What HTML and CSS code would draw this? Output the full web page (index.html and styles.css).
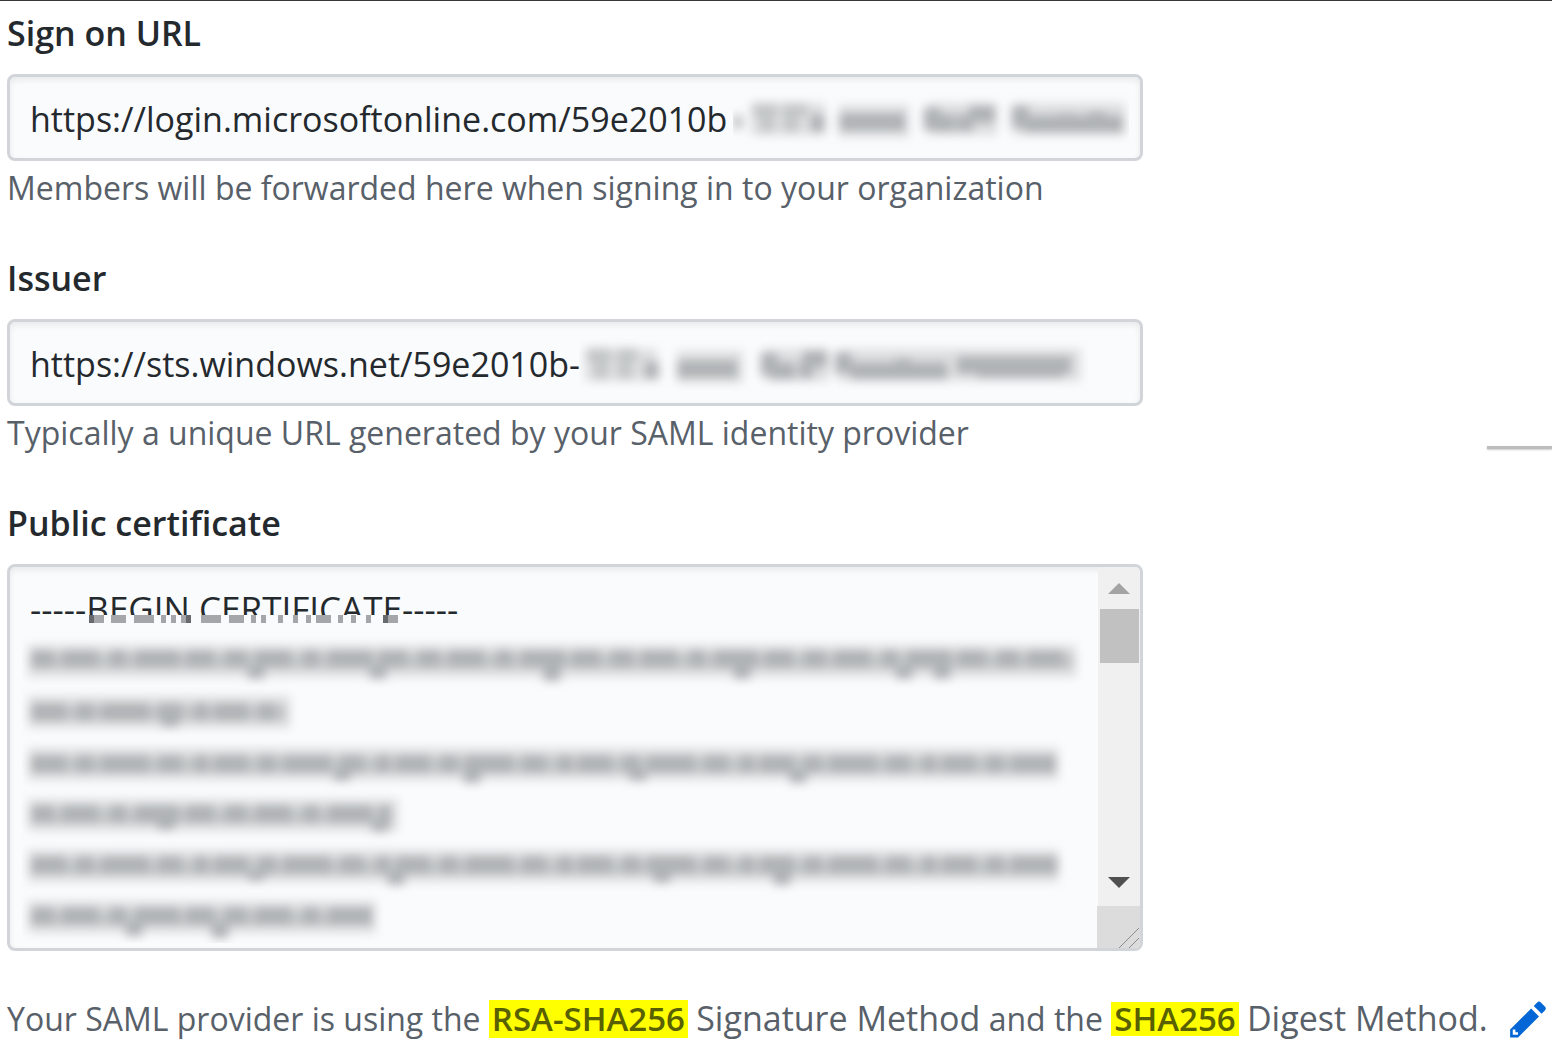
FILE: index.html
```html
<!DOCTYPE html>
<html lang="en">
<head>
<meta charset="utf-8">
<meta name="viewport" content="width=device-width, initial-scale=1">
<title>SAML single sign-on settings</title>
<link rel="stylesheet" href="styles.css">
</head>
<body>
<main class="page">
  <form class="settings">
    <div class="group">
      <label class="label" for="sso-url">Sign on URL</label>
      <div class="control">
        <input class="input" id="sso-url" type="text" value="https://login.microsoftonline.com/59e2010b">
        <svg class="redaction redaction-url" viewBox="0 0 396 54" width="396" height="54" aria-hidden="true">
          <g class="smear">
            <path class="wash" d="M18 27h74M106 29h70M194 27h70M280 27h112"/>
            <path class="ink light" d="M0 30h10M20 18h24M50 18h24M34 22v18M58 22v18"/>
            <path class="ink" d="M78 31h14M106 30h66M199 16v22M202 31h20M224 31h16M236 22h26M287 14v22M292 32h98M334 22v12M364 20v12"/>
          </g>
        </svg>
      </div>
      <p class="hint">Members will be forwarded here when signing in to your organization</p>
    </div>

    <div class="group">
      <label class="label" for="issuer">Issuer</label>
      <div class="control">
        <input class="input" id="issuer" type="text" value="https://sts.windows.net/59e2010b-">
        <svg class="redaction redaction-issuer" viewBox="0 0 510 54" width="510" height="54" aria-hidden="true">
          <g class="smear">
            <path class="wash" d="M6 28h72M98 30h66M184 28h66M258 28h244"/>
            <path class="ink light" d="M8 18h24M38 18h20M22 22v20M46 22v20"/>
            <path class="ink" d="M66 33h14M98 32h60M190 16v22M192 34h24M220 33h14M224 22h24M264 16v20M272 34h96M324 22v12M378 28h114M398 32h86"/>
          </g>
        </svg>
      </div>
      <p class="hint">Typically a unique URL generated by your SAML identity provider</p>
      <span class="rule"></span>
    </div>

    <div class="group">
      <label class="label" for="certificate">Public certificate</label>
      <div class="control certificate">
        <textarea class="textarea" id="certificate" spellcheck="false">-----BEGIN CERTIFICATE-----</textarea>
        <svg class="mosaic" viewBox="0 0 316 8" width="316" height="8" aria-hidden="true">
          <path class="cover" d="M0 4h316"/>
          <path class="tiles" d="M3 4h15M25 4h15M48 4h20M75 4h5M85 4h5M95 4h10M115 4h20M143 4h15M165 4h5M175 4h5M192 4h5M207 4h5M220 4h5M230 4h15M252 4h5M265 4h5M280 4h5M297 4h15"/>
          <path class="tiles dark" d="M3 4h5M100 4h5M297 4h5"/>
        </svg>
        <svg class="redaction redaction-cert" viewBox="0 0 1064 310" width="1064" height="310" aria-hidden="true">
          <g class="smear">
            <path class="wash" d="M6 28h1048M6 79h262M6 131h1030M6 182h370M6 233h1030M6 284h348"/>
            <path class="ink light" d="M8 28h1044M8 80h256M8 132h1026M8 183h362M8 234h1028M8 285h342"/>
            <path class="ink pattern-a" d="M10 26h1042M10 181h358M10 283h340"/>
            <path class="ink pattern-b" d="M10 79h252M10 131h1024M10 232h1026"/>
            <path class="ink" d="M234 34v12M356 34v12M530 34v14M720 34v12M882 34v12M920 34v12M148 86v8M320 138v10M450 138v12M616 138v10M776 138v12M144 189v8M358 189v10M234 240v8M374 240v12M640 240v10M760 240v12M112 291v12M198 291v14"/>
          </g>
        </svg>
        <div class="scrollbar" aria-hidden="true">
          <svg class="arrow arrow-up" viewBox="0 0 22 11" width="22" height="11"><path d="M0 11L11 0l11 11z"/></svg>
          <div class="track"><div class="thumb"></div></div>
          <svg class="arrow arrow-down" viewBox="0 0 22 11" width="22" height="11"><path d="M0 0h22L11 11z"/></svg>
          <svg class="grip" viewBox="0 0 44 42" width="44" height="42"><path d="M22 42l20-20M32 42l10-10"/></svg>
        </div>
      </div>
    </div>

    <div class="summary">
      <p class="methods">Your SAML provider is using the <mark class="mark mark-tall">RSA-SHA256</mark> <span class="method">Signature Method</span> and the <mark class="mark">SHA256</mark> <span class="method">Digest Method.</span></p>
      <button class="edit" type="button" aria-label="Edit signature and digest methods">
        <svg viewBox="0 0 14 16" width="37" height="42" aria-hidden="true"><path fill-rule="evenodd" d="M0 12v3h3l8-8-3-3-8 8zm3 2H1v-2h1v1h1v1zm10.3-9.3L12 6 9 3l1.3-1.3a.996.996 0 0 1 1.41 0l1.59 1.59c.39.39.39 1.02 0 1.41z"/></svg>
      </button>
    </div>
  </form>
</main>
</body>
</html>
```
FILE: styles.css
```css
* {
  box-sizing: border-box;
}

body {
  margin: 0;
  background: #fff;
  color: #24292e;
  font-family: "Open Sans", "Noto Sans", sans-serif;
  font-size: 34px;
  line-height: 48px;
}

.page {
  padding: 8px 5px 0 7px;
  border-top: 1px solid #3a373a;
}

.group {
  position: relative;
  display: flex;
  flex-direction: column;
  margin-bottom: 42px;
}

.label {
  margin-bottom: 17px;
  font-size: 34px;
  font-weight: 600;
}

.control {
  position: relative;
  width: 100%;
  max-width: 1136px;
  height: 87px;
  overflow: hidden;
  border: 3px solid #d1d5da;
  border-radius: 8px;
  background: #fafbfc;
  box-shadow: inset 0 3px 6px rgba(27, 31, 35, 0.08);
}

.input,
.textarea {
  display: block;
  width: 100%;
  height: 100%;
  margin: 0;
  padding: 0 20px;
  border: 0;
  outline: 0;
  background: transparent;
  color: #24292e;
  font: inherit;
}

.input {
  padding-top: 2px;
}

.hint {
  margin: 3px 0 0;
  color: #586069;
  font-size: 32px;
}

.rule {
  position: absolute;
  right: -5px;
  bottom: 8px;
  width: 65px;
  height: 3px;
  background: #bdbdbd;
  box-shadow: 0 1px 2px #ccc;
}

.certificate {
  display: flex;
  height: 387px;
}

.textarea {
  flex: 1;
  padding: 16px 20px;
  overflow: hidden;
  font-size: 35px;
  line-height: 52px;
  resize: none;
}

.redaction,
.mosaic {
  position: absolute;
  pointer-events: none;
}

.redaction-url {
  top: 15px;
  left: 723px;
}

.redaction-issuer {
  top: 15px;
  left: 569px;
}

.redaction-cert {
  top: 66px;
  left: 12px;
}

.smear {
  fill: none;
  filter: blur(5px);
}

.wash {
  stroke: #dddfe0;
  stroke-width: 32;
}

.ink {
  stroke: #b0b3b5;
  stroke-width: 17;
}

.light {
  stroke: #c4c7c8;
  stroke-width: 14;
}

.pattern-a {
  stroke-dasharray: 22 8 36 12 16 9 44 7 28 11;
}

.pattern-b {
  stroke-dasharray: 34 10 18 7 48 9 24 12 14 6;
}

.mosaic {
  top: 48px;
  left: 76px;
}

.cover {
  stroke: #fafbfc;
  stroke-width: 8;
}

.tiles {
  stroke: #a4a6a9;
  stroke-width: 8;
}

.dark {
  stroke: #66696e;
}

.scrollbar {
  display: flex;
  flex: none;
  flex-direction: column;
  align-items: center;
  width: 42px;
  background: #f0f0f0;
}

.track {
  flex: 1;
  width: 100%;
  padding: 0 1px 0 2px;
}

.thumb {
  height: 54px;
  background: #c1c1c1;
}

.arrow-up {
  margin: 16px 0 15px;
  fill: #a3a3a3;
}

.arrow-down {
  margin: 0 0 18px;
  fill: #505050;
}

.grip {
  flex: none;
  background: #dcdcdc;
  fill: none;
  stroke: #8c8c8c;
  stroke-width: 1;
}

.summary {
  display: flex;
  align-items: center;
  justify-content: space-between;
  padding-top: 1px;
}

.methods {
  margin: 0;
  color: #586069;
  font-size: 32px;
}

.method {
  font-size: 34px;
}

.mark {
  display: inline-block;
  padding: 0 3px;
  background: #ff0;
  color: #586000;
  font-size: 33px;
  font-weight: 600;
  line-height: 34px;
}

.mark-tall {
  line-height: 38px;
}

.edit {
  display: flex;
  flex: none;
  margin: 0;
  padding: 0;
  border: 0;
  background: none;
  fill: #0366d6;
  cursor: pointer;
}
```
